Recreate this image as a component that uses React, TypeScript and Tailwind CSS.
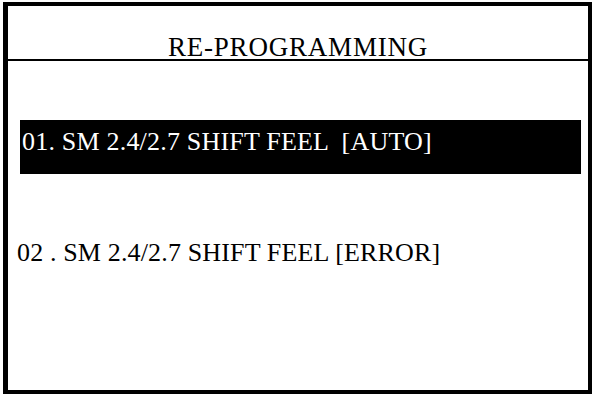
export default function App() {
  return (
    <div className="w-[608px] h-[400px] bg-white overflow-hidden pt-[2px] pl-[3px]" style={{ fontFamily: '"Liberation Serif", "Times New Roman", serif' }}>
      <div className="w-[589px] h-[392px] border-black border-l-[5px] border-t-[4px] border-r-[4px] border-b-[4px] flex flex-col">
        <div className="h-[55px] border-b-2 border-black flex justify-center">
          <div className="pt-[29px] text-[27px] leading-[24px] tracking-[0.8px] text-black">RE-PROGRAMMING</div>
        </div>
        <div className="flex flex-col">
          <div className="mt-[59px] ml-[12px] mr-[7px] h-[54px] bg-black">
            <div className="pt-[9px] pl-[2px] text-[26px] leading-[26px] tracking-[0.2px] text-white whitespace-pre">01. SM 2.4/2.7 SHIFT FEEL  [AUTO]</div>
          </div>
          <div className="mt-[66px] pl-[9px] text-[26px] leading-[26px] tracking-[0.15px] text-black whitespace-pre">02 . SM 2.4/2.7 SHIFT FEEL [ERROR]</div>
        </div>
      </div>
    </div>
  );
}
